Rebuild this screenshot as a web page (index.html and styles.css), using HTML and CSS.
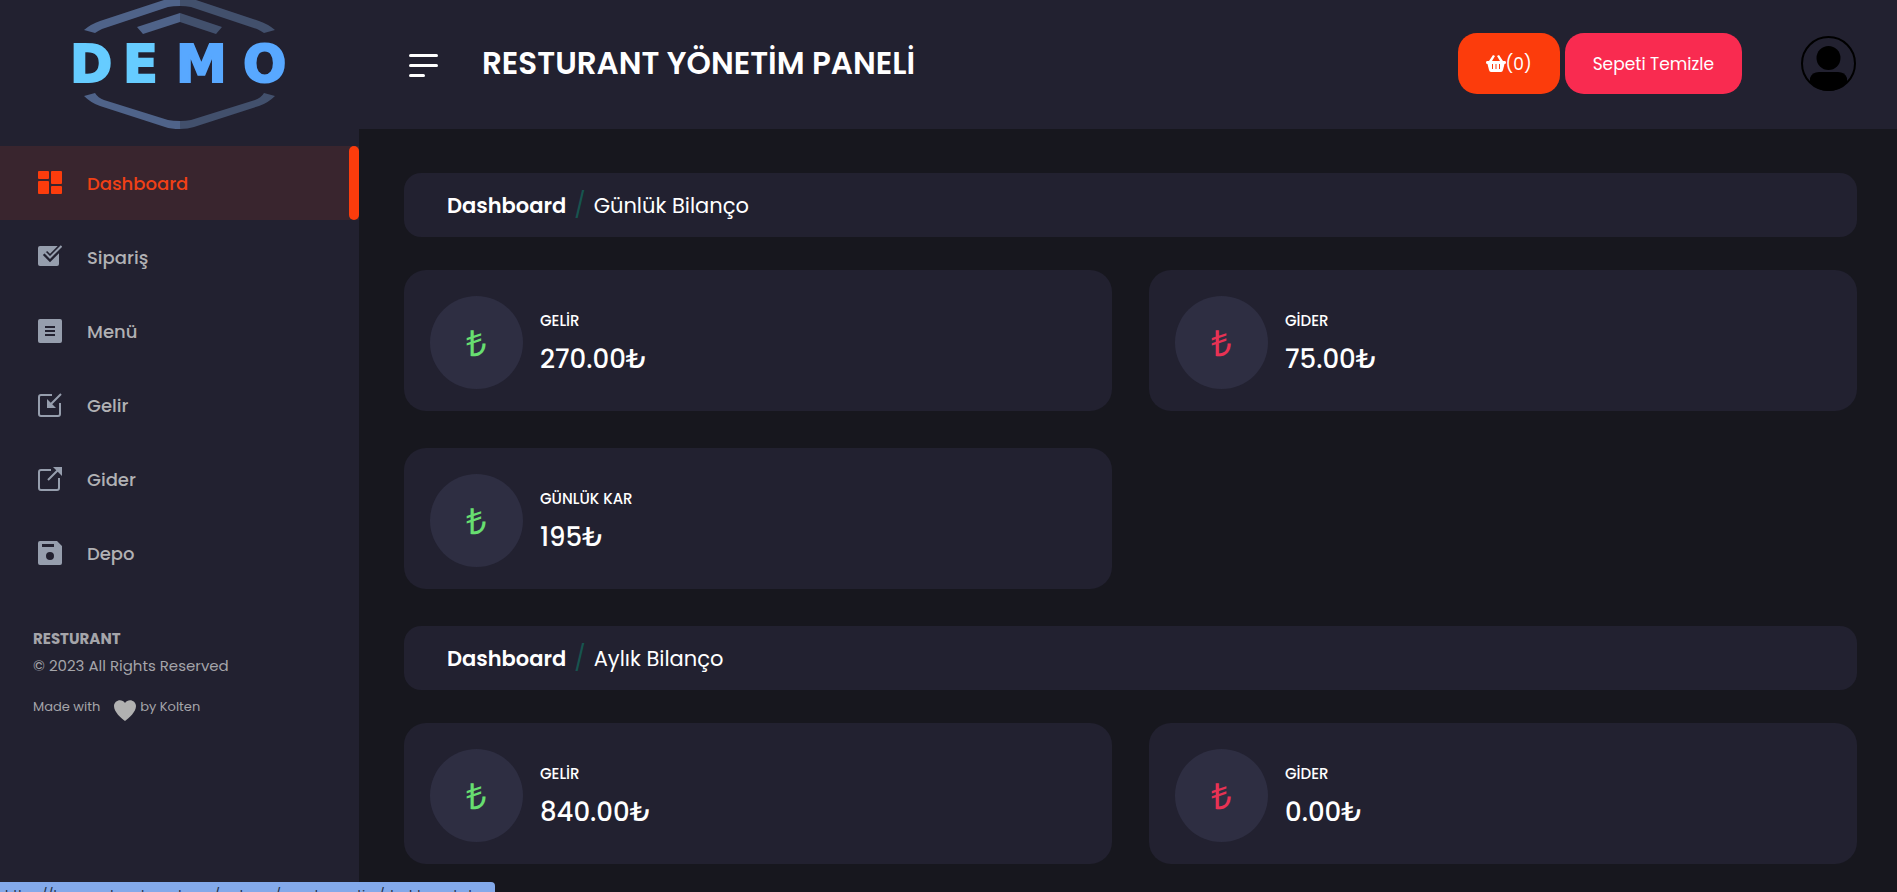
FILE: index.html
```
<!DOCTYPE html>
<html lang="tr">
<head>
    <meta charset="UTF-8">
    <meta name="viewport" content="width=device-width, initial-scale=1.0">
    <title>Resturant Yönetim Paneli</title>
    <link rel="stylesheet" href="styles.css">
</head>
<body>

<div class="layout">
    <aside class="sidebar">
        <a href="#" class="logo">
            <svg width="240" height="129" viewBox="60 0 240 129" role="img" aria-label="DEMO">
                <path d="M84 30 L95 33 Q98 31 102 29 L168 7 Q173 6 180 6 V-2 H170 L100 21 Q91 24 84 30Z" fill="#4f6389"/>
                <path d="M275 30 L264 33 Q261 31 257 29 L191 7 Q186 6 180 6 V-2 H190 L259 21 Q268 24 275 30Z" fill="#42506c"/>
                <path d="M137 27 L180 13 V22 L143 34Z" fill="#4f6389"/>
                <path d="M222 27 L180 13 V22 L216 34Z" fill="#42506c"/>
                <path d="M84 96 L95 93 Q98 98 104 100 L168 120 Q173 121 180 121 V129 Q171 129 165 127 L100 106 Q91 103 84 96Z" fill="#4f6389"/>
                <path d="M275 96 L264 93 Q261 98 255 100 L191 120 Q186 121 180 121 V129 Q188 129 194 127 L259 106 Q268 103 275 96Z" fill="#42506c"/>
                <text class="logo-text light" x="70 123" y="82">DE</text>
                <text class="logo-text" x="176 243" y="82">MO</text>
            </svg>
        </a>

        <nav class="menu">
            <a href="#" class="menu-item active">
                <svg class="icon" viewBox="0 0 24 24"><rect x="0" y="0" width="11" height="8" rx="1"/><rect x="13" y="0" width="11" height="13" rx="1"/><rect x="0" y="10" width="11" height="13" rx="1"/><rect x="13" y="15" width="11" height="8" rx="1"/></svg>
                Dashboard
            </a>
            <a href="#" class="menu-item">
                <svg class="icon" viewBox="0 0 24 24"><rect x="0" y="1" width="21" height="20" rx="2"/><path class="cut" d="M7 8L12 13L23 2"/><path class="line" d="M7 7.500L12 12.500L23.500 1"/></svg>
                Sipariş
            </a>
            <a href="#" class="menu-item">
                <svg class="icon" viewBox="0 0 24 24"><rect x="0" y="0" width="24" height="24" rx="2"/><path class="cut thin" d="M7 8H17M7 12H17M7 16H17"/></svg>
                Menü
            </a>
            <a href="#" class="menu-item">
                <svg class="icon" viewBox="0 0 24 24"><path class="line" d="M14 2H3Q1 2 1 4V21Q1 23 3 23H20Q22 23 22 21V10M23 1L13 11"/><path d="M9 6V15H18Z"/></svg>
                Gelir
            </a>
            <a href="#" class="menu-item">
                <svg class="icon" viewBox="0 0 24 24"><path class="line" d="M13 3H3Q1 3 1 5V21Q1 23 3 23H19Q21 23 21 21V11M10 13L20 3"/><path d="M15 0H24V9Z"/></svg>
                Gider
            </a>
            <a href="#" class="menu-item">
                <svg class="icon" viewBox="0 0 24 24"><path fill-rule="evenodd" d="M2 0H19L24 5V22Q24 24 22 24H2Q0 24 0 22V2Q0 0 2 0ZM4 3V6H16V3ZM12 11A4 4 0 1 0 12 19A4 4 0 1 0 12 11Z"/></svg>
                Depo
            </a>
        </nav>

        <div class="copyright">
            <p class="brand"><strong>RESTURANT</strong><br>© 2023 All Rights Reserved</p>
            <p class="made">Made with
                <svg class="heart" viewBox="0 0 22 21"><path d="M11 21C7 18 0 12 0 6C0 0 8 -2 11 3C14 -2 22 0 22 6C22 12 15 18 11 21Z"/></svg>
                by Kolten</p>
        </div>
    </aside>

    <div class="content">
        <header class="header">
            <button class="hamburger" aria-label="Menu"><span></span><span></span><span></span></button>
            <h1 class="title">RESTURANT YÖNETİM PANELİ</h1>
            <div class="header-buttons">
                <button class="btn btn-cart"><svg class="basket" viewBox="0 0 20 17"><path fill-rule="evenodd" d="M1 6H3L7 0L9 1L6 6H14L11 1L13 0L17 6H19Q20 6 20 7.500Q20 9 18.500 9L17 15Q16.500 17 15 17H5Q3.500 17 3 15L1.500 9Q0 9 0 7.500Q0 6 1 6ZM6 9V14H7V9ZM9.500 9V14H10.500V9ZM13 9V14H14V9Z"/></svg>(0)</button>
                <button class="btn btn-clear">Sepeti Temizle</button>
            </div>
            <a href="#" class="avatar" aria-label="Profil">
                <svg width="55" height="55" viewBox="0 0 55 55"><circle cx="27.500" cy="27.500" r="26.500" fill="none" stroke="#000" stroke-width="2"/><circle cx="27.500" cy="22" r="12"/><path d="M9 46V42Q11 36 18 36H37Q44 36 46 42V46Q38 55 27.500 55Q17 55 9 46Z"/></svg>
            </a>
        </header>

        <main class="main">
            <nav class="breadcrumb"><a href="#">Dashboard</a><span class="slash">/</span><span>Günlük Bilanço</span></nav>
            <div class="cards">
                <div class="card">
                    <span class="card-icon green">₺</span>
                    <div class="card-text"><p class="card-label">GELİR</p><h2 class="card-value">270.00₺</h2></div>
                </div>
                <div class="card">
                    <span class="card-icon red">₺</span>
                    <div class="card-text"><p class="card-label">GİDER</p><h2 class="card-value">75.00₺</h2></div>
                </div>
                <div class="card">
                    <span class="card-icon green">₺</span>
                    <div class="card-text"><p class="card-label">GÜNLÜK KAR</p><h2 class="card-value">195₺</h2></div>
                </div>
            </div>

            <nav class="breadcrumb"><a href="#">Dashboard</a><span class="slash">/</span><span>Aylık Bilanço</span></nav>
            <div class="cards">
                <div class="card">
                    <span class="card-icon green">₺</span>
                    <div class="card-text"><p class="card-label">GELİR</p><h2 class="card-value">840.00₺</h2></div>
                </div>
                <div class="card">
                    <span class="card-icon red">₺</span>
                    <div class="card-text"><p class="card-label">GİDER</p><h2 class="card-value">0.00₺</h2></div>
                </div>
            </div>
        </main>
    </div>
</div>

<div class="status-bar">https://hammerheadpanel.com/restoran/panel-yonetim/dashboard.php</div>

</body>
</html>
```
FILE: styles.css
```
* {
    box-sizing: border-box;
}

body {
    font-family: 'Poppins', 'Inter', sans-serif;
    margin: 0;
    height: 100vh;
    overflow: hidden;
    background-color: #17171e;
    color: #fff;
}

a {
    color: inherit;
    text-decoration: none;
}

p, h1, h2 {
    margin: 0;
}

button {
    border: 0;
    padding: 0;
    font-family: inherit;
    color: #fff;
    cursor: pointer;
}

.layout {
    display: flex;
    min-height: 100vh;
}

/* Sidebar */
.sidebar {
    width: 359px;
    flex-shrink: 0;
    background-color: #222130;
}

.logo {
    display: flex;
    justify-content: center;
    height: 146px;
}

.logo-text {
    font-family: 'DejaVu Sans', sans-serif;
    font-weight: bold;
    font-size: 51px;
    fill: #58a8ff;
    stroke: #58a8ff;
    stroke-width: 2px;
}

.logo-text.light {
    fill: #66ccff;
    stroke: #66ccff;
}

.menu-item {
    display: flex;
    align-items: center;
    gap: 25px;
    height: 74px;
    padding-left: 38px;
    font-size: 18px;
    font-weight: 500;
    color: #b1b1b4;
}

.menu-item.active {
    position: relative;
    background-color: #39252e;
    color: #f04016;
}

.menu-item.active::after {
    content: "";
    position: absolute;
    top: 0;
    right: 0;
    bottom: 0;
    width: 10px;
    border-radius: 5px;
    background-color: #fc3c0c;
}

.icon {
    width: 24px;
    height: 24px;
    fill: #969ead;
}

.active .icon {
    fill: #fc3c0c;
}

.icon .line {
    fill: none;
    stroke: #969ead;
    stroke-width: 2;
}

.icon .cut {
    fill: none;
    stroke: #222130;
    stroke-width: 6;
}

.icon .cut.thin {
    stroke-width: 2;
}

.copyright {
    padding: 35px 33px;
    color: #a5a5aa;
}

.brand {
    font-size: 15px;
    line-height: 27px;
}

.made {
    display: flex;
    align-items: center;
    height: 28px;
    margin-top: 14px;
    font-size: 13px;
}

.heart {
    width: 22px;
    height: 21px;
    margin: 6px 4px 0 14px;
    fill: #b1b1b1;
}

/* Header */
.content {
    flex: 1;
    min-width: 0;
}

.header {
    display: flex;
    align-items: center;
    height: 129px;
    padding: 0 41px 2px 50px;
    background-color: #222130;
}

.hamburger {
    display: flex;
    flex-direction: column;
    gap: 7px;
    width: 29px;
    margin: 4px 44px 0 0;
    background: none;
}

.hamburger span {
    width: 29px;
    height: 3px;
    border-radius: 2px;
    background-color: #fff;
}

.hamburger span:last-child {
    width: 16px;
}

.title {
    font-size: 31px;
    font-weight: 600;
}

.header-buttons {
    display: flex;
    gap: 5px;
    margin-left: auto;
}

.btn {
    display: flex;
    align-items: center;
    height: 61px;
    padding: 0 28px;
    border-radius: 19px;
    font-size: 17px;
}

.btn-cart {
    background-color: #fc3c0c;
}

.btn-clear {
    background-color: #f92b50;
}

.basket {
    width: 20px;
    height: 17px;
    fill: #fff;
}

.avatar {
    display: flex;
    margin-left: 59px;
}

/* Page content */
.main {
    padding: 44px 40px 0 45px;
}

.breadcrumb {
    display: flex;
    align-items: center;
    gap: 8px;
    height: 64px;
    padding-left: 43px;
    border-radius: 17px;
    background-color: #222130;
    font-size: 21px;
}

.breadcrumb a {
    font-weight: 600;
}

.slash {
    font-size: 24px;
    color: #17544f;
}

.cards {
    display: grid;
    grid-template-columns: 1fr 1fr;
    gap: 37px;
    margin: 33px 0 37px;
}

.card {
    display: flex;
    align-items: center;
    gap: 17px;
    padding: 26px 26px 22px;
    border-radius: 22px;
    background-color: #222130;
}

.card-icon {
    display: flex;
    align-items: center;
    justify-content: center;
    width: 93px;
    height: 93px;
    border-radius: 50%;
    background-color: #2e2e42;
    font-family: 'Open Sans', sans-serif;
    font-size: 36px;
}

.green {
    color: #67de70;
}

.red {
    color: #e83254;
}

.card-text {
    padding-top: 8px;
}

.card-label {
    font-size: 15px;
    font-weight: 500;
    line-height: 24px;
}

.card-value {
    font-size: 26px;
    font-weight: 500;
    line-height: 52px;
}

/* Link preview at the bottom of the window */
.status-bar {
    position: fixed;
    left: 0;
    bottom: 0;
    height: 10px;
    padding: 5px 9px 0 5px;
    border-radius: 0 4px 0 0;
    overflow: hidden;
    background-color: #83a9ea;
    color: #222c40;
    font-size: 13px;
    line-height: 16px;
}
```
